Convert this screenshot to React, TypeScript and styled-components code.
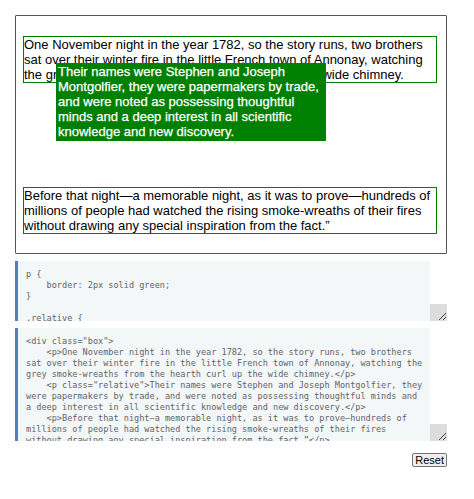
import React from "react";
import styled, { createGlobalStyle } from "styled-components";

const Global = createGlobalStyle`
  html, body { margin: 0; padding: 0; background: #fff; }
  body { font-family: "Liberation Sans", Arial, sans-serif; }
`;

const Page = styled.div`
  width: 474px;
  box-sizing: border-box;
  padding: 15px 27px 0 15px;
  display: flex;
  flex-direction: column;
`;

const Box = styled.div`
  box-sizing: border-box;
  width: 432px;
  border: 1px solid #555;
  border-radius: 1px;
  padding: 7px 9px 6px 7px;
  margin-bottom: 7px;
`;

const Para = styled.p<{ $relative?: boolean }>`
  margin: 13px 0;
  border: 1px solid green;
  font-size: 13px;
  line-height: 15px;
  color: #000;
  ${(p) =>
    p.$relative
      ? `
    position: relative;
    top: -33px;
    left: 33px;
    width: 270px;
    box-sizing: border-box;
    background: green;
    color: #fff;
    padding: 0 0 1px 1px;
    -webkit-text-stroke: 0.25px #fff;
  `
      : ""}
`;

const Editor = styled.div<{ $h: number }>`
  display: flex;
  height: ${(p) => p.$h}px;
  margin-bottom: 7px;
`;

const CodeArea = styled.pre`
  flex: 1;
  margin: 0;
  box-sizing: border-box;
  background: #f4f7f8;
  border-left: 3px solid #4f81bd;
  padding: 8px 0 0 8px;
  overflow: hidden;
  font-family: "DejaVu Sans Mono", monospace;
  font-size: 8.55px;
  line-height: 11px;
  color: #5f6368;
  white-space: pre;
`;

const Gutter = styled.div`
  width: 17px;
  display: flex;
  align-items: flex-end;
`;

const Resizer = styled.div`
  width: 17px;
  height: 17px;
  background: #dcdcdc;
  display: flex;
  align-items: flex-end;
  justify-content: flex-end;
`;

const Actions = styled.div`
  display: flex;
  justify-content: flex-end;
  margin-top: 5px;
`;

const Button = styled.button`
  font-family: "Liberation Sans", Arial, sans-serif;
  font-size: 11px;
  line-height: 12px;
  padding: 0 2px;
  border: 1px solid #767676;
  border-radius: 2px;
  background: #efefef;
  color: #000;
`;

const Grip = () => (
  <svg width="10" height="10" viewBox="0 0 10 10">
    <path d="M9 2 L2 9 M9 6 L6 9" stroke="#444" strokeWidth="1" />
  </svg>
);

const css = `p {
    border: 2px solid green;
}

.relative {
    position: relative;
    top: -40px;
    left: 40px;
    background-color: green;
    color: white;
}`;

const html = `<div class="box">
    <p>One November night in the year 1782, so the story runs, two brothers
sat over their winter fire in the little French town of Annonay, watching the
grey smoke-wreaths from the hearth curl up the wide chimney.</p>
    <p class="relative">Their names were Stephen and Joseph Montgolfier, they
were papermakers by trade, and were noted as possessing thoughtful minds and
a deep interest in all scientific knowledge and new discovery.</p>
    <p>Before that night\u2014a memorable night, as it was to prove\u2014hundreds of
millions of people had watched the rising smoke-wreaths of their fires
without drawing any special inspiration from the fact.\u201d</p>
</div>`;

export default function App() {
  return (
    <>
      <Global />
      <Page>
        <Box>
          <Para>
            One November night in the year 1782, so the story runs, two brothers
            sat over their winter fire in the little French town of Annonay,
            watching the grey smoke-wreaths from the hearth curl up the wide
            chimney.
          </Para>
          <Para $relative>
            Their names were Stephen and Joseph Montgolfier, they were
            papermakers by trade, and were noted as possessing thoughtful minds
            and a deep interest in all scientific knowledge and new discovery.
          </Para>
          <Para>
            Before that night—a memorable night, as it was to prove—hundreds of
            millions of people had watched the rising smoke-wreaths of their
            fires without drawing any special inspiration from the fact.”
          </Para>
        </Box>
        <Editor $h={60}>
          <CodeArea>{css}</CodeArea>
          <Gutter>
            <Resizer>
              <Grip />
            </Resizer>
          </Gutter>
        </Editor>
        <Editor $h={113}>
          <CodeArea>{html}</CodeArea>
          <Gutter>
            <Resizer>
              <Grip />
            </Resizer>
          </Gutter>
        </Editor>
        <Actions>
          <Button>Reset</Button>
        </Actions>
      </Page>
    </>
  );
}
